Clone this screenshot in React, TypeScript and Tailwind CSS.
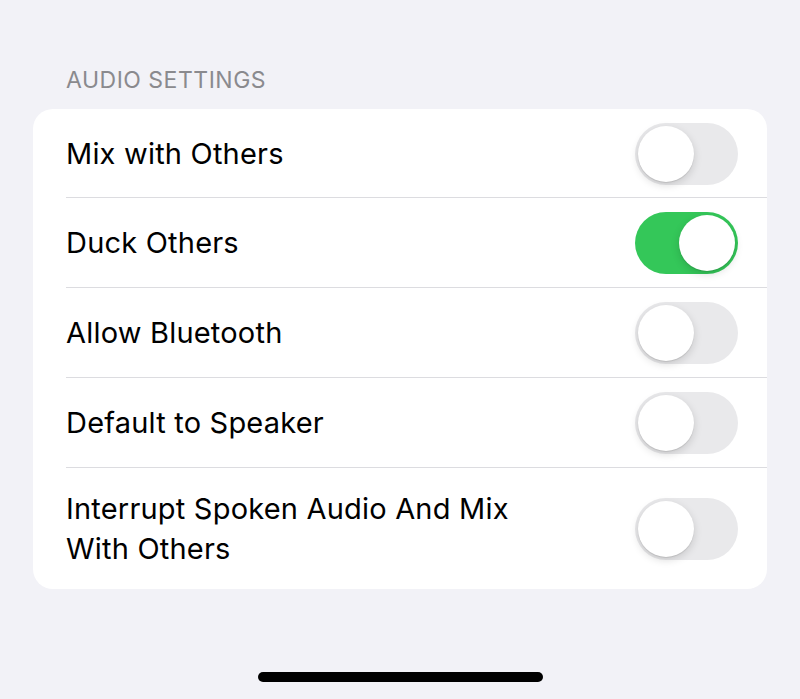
import React, { useState } from 'react';

interface Setting {
  label: string;
  on: boolean;
}

const initial: Setting[] = [
  { label: 'Mix with Others', on: false },
  { label: 'Duck Others', on: true },
  { label: 'Allow Bluetooth', on: false },
  { label: 'Default to Speaker', on: false },
  { label: 'Interrupt Spoken Audio And Mix With Others', on: false },
];

function Toggle({ on, onClick }: { on: boolean; onClick: () => void }) {
  return (
    <button
      onClick={onClick}
      className={
        on
          ? 'relative w-[103px] h-[62px] rounded-full bg-[#34c759] shrink-0'
          : 'relative w-[103px] h-[62px] rounded-full bg-[#e9e9eb] shrink-0'
      }
    >
      <span
        className={
          on
            ? 'absolute top-[3px] left-[44px] w-[56px] h-[56px] rounded-full bg-white shadow-[0_3px_8px_rgba(0,0,0,0.15),0_1px_1px_rgba(0,0,0,0.1)]'
            : 'absolute top-[3px] left-[3px] w-[56px] h-[56px] rounded-full bg-white shadow-[0_3px_8px_rgba(0,0,0,0.15),0_1px_1px_rgba(0,0,0,0.1)]'
        }
      />
    </button>
  );
}

export default function App() {
  const [settings, setSettings] = useState<Setting[]>(initial);

  const flip = (i: number) => {
    setSettings(settings.map((s, j) => (j === i ? { ...s, on: !s.on } : s)));
  };

  return (
    <div
      className="h-[699px] bg-[#f2f2f7] flex flex-col px-[33px] text-black"
      style={{ fontFamily: 'Inter, "Noto Sans", sans-serif' }}
    >
      <div className="pt-[66px] pl-[33px] h-[109px] text-[23px] leading-[28px] text-[#8a8a8e] tracking-[0.5px]">
        AUDIO SETTINGS
      </div>

      <div className="bg-white rounded-[20px] overflow-hidden">
        {settings.map((s, i) => {
          const last = i === settings.length - 1;
          return (
            <div key={s.label} className="pl-[33px]">
              <div
                className={
                  last
                    ? 'h-[121px] flex items-center justify-between pr-[29px]'
                    : i === 0
                    ? 'h-[89px] pt-[1px] flex items-center justify-between pr-[29px] border-b border-[#dcdce0]'
                    : 'h-[90px] flex items-center justify-between pr-[29px] border-b border-[#dcdce0]'
                }
              >
                <span className="text-[29px] leading-[40px] tracking-[0.2px] max-w-[480px]">{s.label}</span>
                <Toggle on={s.on} onClick={() => flip(i)} />
              </div>
            </div>
          );
        })}
      </div>

      <div className="flex-1 flex items-end justify-center pb-[17px]">
        <div className="w-[285px] h-[10px] rounded-full bg-black" />
      </div>
    </div>
  );
}
